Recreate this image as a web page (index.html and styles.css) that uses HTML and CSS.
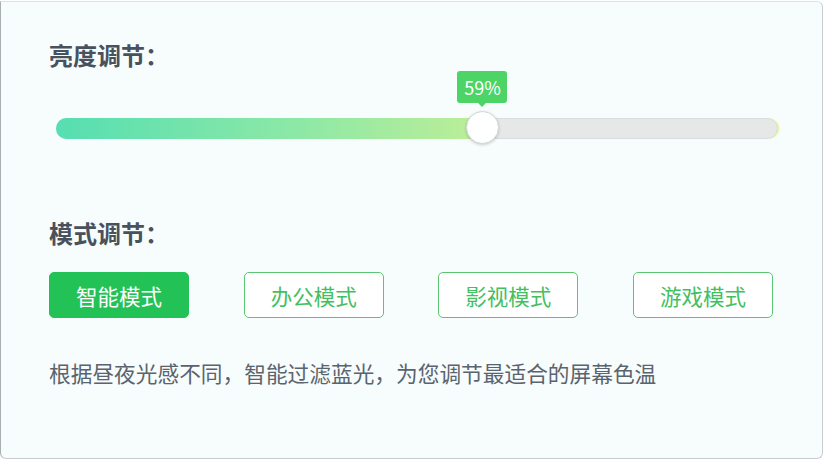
FILE: index.html
```html
<!DOCTYPE html>
<html lang="zh-CN">
<head>
    <meta charset="UTF-8">
    <meta name="viewport" content="width=device-width, initial-scale=1.0">
    <title>显示设置</title>
    <link rel="stylesheet" href="styles.css">
</head>
<body>
    <div class="panel">
        <h2 class="section-title">亮度调节：</h2>

        <div class="slider">
            <div class="slider-track"></div>
            <div class="slider-fill" style="width: 59%"></div>
            <div class="slider-thumb" style="left: 59%">
                <span class="slider-tip">59%</span>
            </div>
        </div>

        <h2 class="section-title mode-title">模式调节：</h2>

        <div class="modes">
            <button class="mode-btn active">智能模式</button>
            <button class="mode-btn">办公模式</button>
            <button class="mode-btn">影视模式</button>
            <button class="mode-btn">游戏模式</button>
        </div>

        <p class="mode-desc">根据昼夜光感不同，智能过滤蓝光，为您调节最适合的屏幕色温</p>
    </div>
</body>
</html>
```

FILE: styles.css
```css
* {
    margin: 0;
    padding: 0;
    box-sizing: border-box;
    font-family: "Noto Sans CJK SC", "Noto Sans", sans-serif;
}

body {
    background: #ffffff;
}

.panel {
    width: 823px;
    height: 458px;
    margin-top: 1px;
    padding: 37px 49px 0 48px;
    background: #f7fcfd;
    border: 1px solid #dde2e4;
    border-left-color: #a9aeb0;
    border-bottom-color: #c9cdd0;
    border-right-color: #c9cdd0;
    border-radius: 0 6px 6px 6px;
}

.section-title {
    font-size: 24px;
    line-height: 32px;
    font-weight: bold;
    color: #48525d;
}

/* slider */
.slider {
    position: relative;
    height: 21px;
    margin: 47px -5px 0 7px;
}

.slider-track {
    height: 100%;
    background: #e6e8e8;
    border: 1px solid #d9dddd;
    border-radius: 11px;
    box-shadow: 2px 0 2px -1px #e6f47c;
}

.slider-fill {
    position: absolute;
    left: 0;
    top: 0;
    height: 100%;
    border-radius: 11px 0 0 11px;
    background: linear-gradient(to right, #56deb2, #8be8a6 55%, #bdee98);
}

.slider-thumb {
    position: absolute;
    top: -7px;
    width: 33px;
    height: 33px;
    margin-left: -16px;
    background: #ffffff;
    border: 1px solid #d2d6d8;
    border-radius: 50%;
    box-shadow: 0 1px 3px rgba(0, 0, 0, 0.18);
}

.slider-tip {
    position: absolute;
    left: 50%;
    bottom: 40px;
    width: 50px;
    height: 32px;
    margin-left: -25px;
    background: #4cd467;
    border-radius: 3px;
    color: #ffffff;
    font-size: 18px;
    line-height: 32px;
    text-align: center;
}

.slider-tip::after {
    content: "";
    position: absolute;
    left: 50%;
    bottom: -4px;
    margin-left: -4px;
    border-left: 4px solid transparent;
    border-right: 4px solid transparent;
    border-top: 4px solid #4cd467;
}

/* modes */
.mode-title {
    margin-top: 78px;
}

.modes {
    display: flex;
    justify-content: space-between;
    margin-top: 23px;
}

.mode-btn {
    width: 140px;
    height: 46px;
    background: #ffffff;
    border: 1.5px solid #5ac674;
    border-radius: 5px;
    color: #43bf5f;
    font-size: 21.5px;
    cursor: pointer;
}

.mode-btn.active {
    background: #23c257;
    border-color: #23c257;
    color: #ffffff;
}

.mode-desc {
    margin-top: 40px;
    font-size: 21.7px;
    line-height: 30px;
    color: #5a646e;
}
```
